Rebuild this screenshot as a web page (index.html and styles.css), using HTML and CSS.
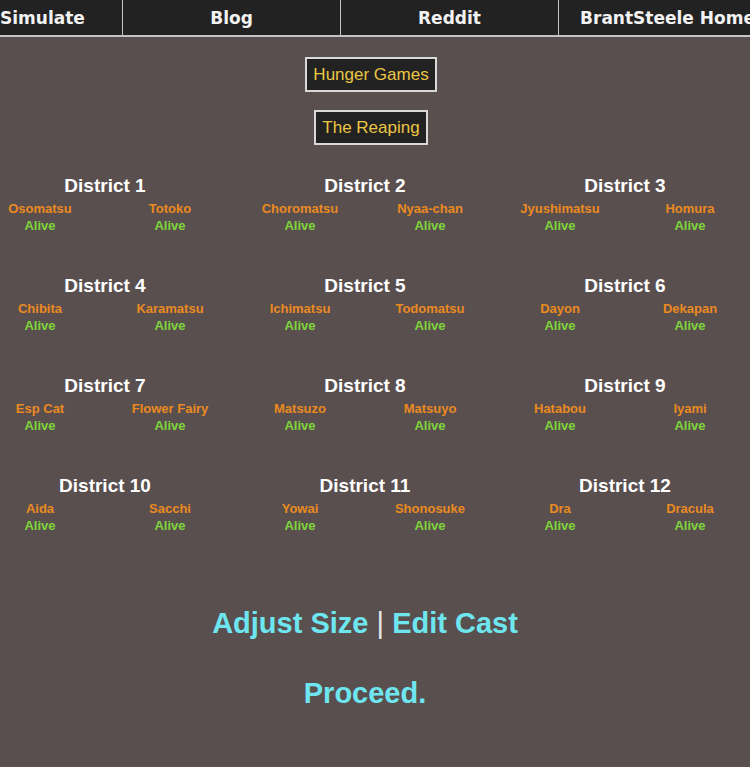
FILE: index.html
```html
<!DOCTYPE html>
<html>
<head>
<meta charset="utf-8">
<link rel="stylesheet" href="styles.css">
</head>
<body>
<nav class="nav">
  <a class="nav-item nav-first">Simulate</a>
  <a class="nav-item">Blog</a>
  <a class="nav-item">Reddit</a>
  <a class="nav-item">BrantSteele Home</a>
</nav>
<main class="page">
  <div class="titles">
    <div class="title-box">Hunger Games</div>
    <div class="title-box">The Reaping</div>
  </div>
  <div class="districts">
    <div class="district"><div class="d-title">District 1</div><div class="tributes"><div class="tribute"><div class="name">Osomatsu</div><div class="status">Alive</div></div><div class="tribute"><div class="name">Totoko</div><div class="status">Alive</div></div></div></div>
    <div class="district"><div class="d-title">District 2</div><div class="tributes"><div class="tribute"><div class="name">Choromatsu</div><div class="status">Alive</div></div><div class="tribute"><div class="name">Nyaa-chan</div><div class="status">Alive</div></div></div></div>
    <div class="district"><div class="d-title">District 3</div><div class="tributes"><div class="tribute"><div class="name">Jyushimatsu</div><div class="status">Alive</div></div><div class="tribute"><div class="name">Homura</div><div class="status">Alive</div></div></div></div>
    <div class="district"><div class="d-title">District 4</div><div class="tributes"><div class="tribute"><div class="name">Chibita</div><div class="status">Alive</div></div><div class="tribute"><div class="name">Karamatsu</div><div class="status">Alive</div></div></div></div>
    <div class="district"><div class="d-title">District 5</div><div class="tributes"><div class="tribute"><div class="name">Ichimatsu</div><div class="status">Alive</div></div><div class="tribute"><div class="name">Todomatsu</div><div class="status">Alive</div></div></div></div>
    <div class="district"><div class="d-title">District 6</div><div class="tributes"><div class="tribute"><div class="name">Dayon</div><div class="status">Alive</div></div><div class="tribute"><div class="name">Dekapan</div><div class="status">Alive</div></div></div></div>
    <div class="district"><div class="d-title">District 7</div><div class="tributes"><div class="tribute"><div class="name">Esp Cat</div><div class="status">Alive</div></div><div class="tribute"><div class="name">Flower Fairy</div><div class="status">Alive</div></div></div></div>
    <div class="district"><div class="d-title">District 8</div><div class="tributes"><div class="tribute"><div class="name">Matsuzo</div><div class="status">Alive</div></div><div class="tribute"><div class="name">Matsuyo</div><div class="status">Alive</div></div></div></div>
    <div class="district"><div class="d-title">District 9</div><div class="tributes"><div class="tribute"><div class="name">Hatabou</div><div class="status">Alive</div></div><div class="tribute"><div class="name">Iyami</div><div class="status">Alive</div></div></div></div>
    <div class="district"><div class="d-title">District 10</div><div class="tributes"><div class="tribute"><div class="name">Aida</div><div class="status">Alive</div></div><div class="tribute"><div class="name">Sacchi</div><div class="status">Alive</div></div></div></div>
    <div class="district"><div class="d-title">District 11</div><div class="tributes"><div class="tribute"><div class="name">Yowai</div><div class="status">Alive</div></div><div class="tribute"><div class="name">Shonosuke</div><div class="status">Alive</div></div></div></div>
    <div class="district"><div class="d-title">District 12</div><div class="tributes"><div class="tribute"><div class="name">Dra</div><div class="status">Alive</div></div><div class="tribute"><div class="name">Dracula</div><div class="status">Alive</div></div></div></div>
  </div>
  <div class="links"><a class="link">Adjust Size</a> <span class="sep">|</span> <a class="link">Edit Cast</a></div>
  <div class="links proceed"><a class="link">Proceed.</a></div>
</main>
</body>
</html>
```
FILE: styles.css
```css
html, body {
  margin: 0;
  padding: 0;
  background: #5a4f4f;
  overflow: hidden;
}
body {
  font-family: "Liberation Sans", Arial, sans-serif;
  width: 750px;
  height: 767px;
}
.nav {
  display: flex;
  background: #222222;
  border-bottom: 2px solid #c4c4c4;
  height: 35px;
  overflow: hidden;
  white-space: nowrap;
}
.nav-item {
  flex: 0 0 218px;
  color: #f2f2f2;
  font-family: "DejaVu Sans", Verdana, sans-serif;
  font-weight: bold;
  font-size: 17px;
  line-height: 35px;
  padding-top: 1px;
  text-align: center;
  border-left: 1px solid #c4c4c4;
  box-sizing: border-box;
}
.nav-first {
  flex: 0 0 122px;
  text-align: left;
  border-left: none;
}
.page {
  width: 730px;
  display: flex;
  flex-direction: column;
  align-items: center;
}
.titles {
  display: flex;
  flex-direction: column;
  align-items: center;
  gap: 18px;
  margin-top: 20px;
  padding-left: 12px;
}
.title-box {
  background: #222222;
  border: 2px solid #d8d8d8;
  color: #ebc644;
  font-size: 17px;
  line-height: 20px;
  padding: 6px 6px 5px;
}
.districts {
  display: grid;
  grid-template-columns: repeat(3, 260px);
  row-gap: 40px;
  justify-content: center;
  margin-top: 29px;
  width: 780px;
}
.district {
  display: flex;
  flex-direction: column;
  align-items: center;
}
.d-title {
  color: #ffffff;
  font-weight: bold;
  font-size: 19px;
  line-height: 22px;
  padding-top: 1px;
  margin-bottom: 3px;
}
.tributes {
  display: flex;
}
.tribute {
  width: 130px;
  text-align: center;
  font-weight: bold;
  font-size: 13px;
  line-height: 17px;
}
.name {
  color: #ea8a1f;
}
.status {
  color: #7ed63a;
}
.links {
  margin-top: 72px;
  font-size: 29px;
  font-weight: bold;
  line-height: 34px;
  color: #6ee6ef;
}
.proceed {
  margin-top: 36px;
}
.sep {
  color: #e8e8e8;
  font-weight: normal;
}
```
